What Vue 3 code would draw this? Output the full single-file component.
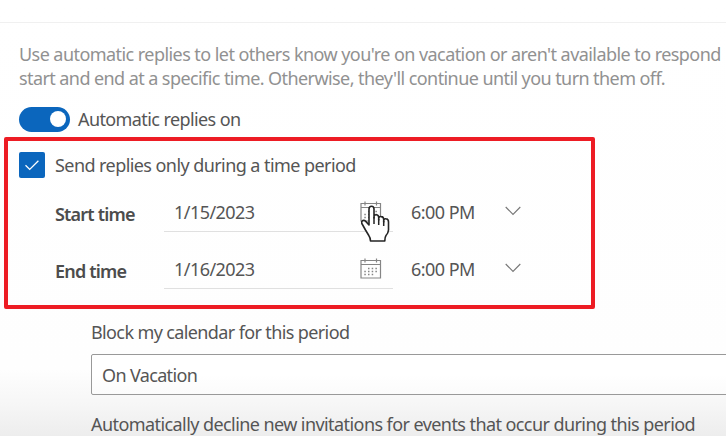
<script setup>
  import { ref } from "vue"

  const repliesOn = ref(true)
  const timePeriod = ref(true)
  const eventTitle = ref("On Vacation")

  const times = [
    { id: "start", label: "Start time", date: "1/15/2023", time: "6:00 PM" },
    { id: "end", label: "End time", date: "1/16/2023", time: "6:00 PM" },
  ]
</script>

<template>
  <main class="settings">
    <header class="top_bar"></header>

    <p class="intro">
      <span class="intro_first">Use automatic replies to let others know you're on vacation or aren't available to respond</span><br />
      <span class="intro_second">start and end at a specific time. Otherwise, they'll continue until you turn them off.</span>
    </p>

    <div class="toggle_row" @click="repliesOn = !repliesOn">
      <span class="toggle" :class="{ on: repliesOn }"><span class="knob"></span></span>
      <span class="toggle_label">Automatic replies on</span>
    </div>

    <section class="period">
      <div class="check_row" @click="timePeriod = !timePeriod">
        <span class="checkbox">
          <svg v-if="timePeriod" width="26" height="26" viewBox="0 0 26 26">
            <path d="M6.5 13.3 L10.7 17.4 L19.4 8.8" fill="none" stroke="#fff" stroke-width="1.3" />
          </svg>
        </span>
        <span class="check_label">Send replies only during a time period</span>
      </div>

      <div v-for="row in times" :key="row.id" class="time_row" :class="row.id">
        <span class="time_label">{{ row.label }}</span>
        <div class="date_field">
          <span class="date">{{ row.date }}</span>
          <svg class="calendar" width="22" height="22" viewBox="0 0 22 22" fill="none" stroke="#858585" stroke-width="1.2">
            <path d="M1 2.5 H20.5 V20 H1 Z M1 6.5 H20.5 M5 0.5 V4.5 M16.5 0.5 V4.5" />
            <path d="M8 10.5 H18 M4.3 13.5 H18 M4.3 16.5 H14.5" stroke-width="1.5" stroke-dasharray="1.5 2.2" />
          </svg>
          <!-- hand pointer over the first date picker -->
          <svg v-if="row.id === 'start'" class="pointer" width="30" height="38" viewBox="0 0 30 38">
            <path
              d="M8 20 V4 Q8 1.3 10.6 1.3 Q13 1.3 13 4 V13 V11.8 Q13 9.8 15.2 9.8 Q17.7 9.8 17.7 12.5 V15 V13.7 Q18 11.3 20.2 11.6 Q22.7 11.8 22.7 14.5 V17 V16 Q22.9 13.5 25 13.8 Q27.5 14 27.5 17 V25 Q27.3 28 25 30.5 Q23.8 32 23.8 36 H9.5 Q9.5 33 7.8 30.5 L4.5 25 L1.7 20 Q0 17.5 1 16.2 Q2.7 14.5 5 16.6 Z"
              fill="#fff"
              stroke="#252525"
              stroke-width="1.6"
              stroke-linejoin="round"
            />
            <path d="M13 12 V19 M17.7 14 V20 M22.7 16 V21" stroke="#252525" stroke-width="1.5" />
          </svg>
        </div>
        <span class="time">{{ row.time }}</span>
        <svg class="chevron" width="16" height="10" viewBox="0 0 16 10">
          <path d="M0.7 1 L8 8.4 L15.3 1" fill="none" stroke="#777" stroke-width="1.1" />
        </svg>
      </div>
    </section>

    <section class="block_calendar">
      <label class="block_label" for="title">Block my calendar for this period</label>
      <input id="title" v-model="eventTitle" class="title_input" type="text" />
      <p class="decline">Automatically decline new invitations for events that occur during this period</p>
    </section>
  </main>
</template>

<style>
  body {
    margin: 0;
    overflow: hidden;
  }
</style>

<style scoped>
  .settings {
    box-sizing: border-box;
    width: 726px;
    height: 436px;
    overflow: hidden;
    background: linear-gradient(#fff 0, #fefefe 370px, #f6f6f6 405px, #ededed 436px);
    color: #555;
    font-family: "Noto Sans", "Open Sans", sans-serif;
    font-size: 18px;
    line-height: 24px;
    white-space: nowrap;
  }

  .top_bar {
    height: 22px;
    border-bottom: 1px solid #f0f0f0;
  }

  .intro {
    margin: 19px 0 0 19px;
    color: #919191;
  }

  .intro_first {
    letter-spacing: -0.56px;
  }

  .intro_second {
    letter-spacing: -0.58px;
  }

  .toggle_row {
    display: flex;
    align-items: center;
    gap: 8px;
    height: 26px;
    margin: 16px 0 0 19px;
  }

  .toggle {
    display: flex;
    align-items: center;
    box-sizing: border-box;
    width: 51px;
    height: 25px;
    padding: 0 4px;
    border-radius: 13px;
    background: #8a8a8a;
  }

  .toggle.on {
    justify-content: flex-end;
    background: #0b66bd;
  }

  .knob {
    width: 16px;
    height: 16px;
    border-radius: 50%;
    background: #fff;
  }

  .toggle_label {
    letter-spacing: -0.6px;
  }

  .period {
    box-sizing: border-box;
    width: 591px;
    height: 172px;
    margin: 5px 0 0 4px;
    padding: 11px 0 0 11px;
    border: 4px solid #ed1c24;
    border-radius: 2px;
  }

  .check_row {
    display: flex;
    align-items: center;
    gap: 10px;
    height: 26px;
  }

  .checkbox {
    width: 26px;
    height: 26px;
    border-radius: 2px;
    background: #0b66bd;
  }

  .checkbox svg {
    display: block;
  }

  .check_label {
    letter-spacing: -0.57px;
  }

  .time_row {
    display: flex;
    align-items: center;
    height: 37px;
    margin-top: 17px;
    padding-left: 36px;
  }

  .time_row.end {
    margin-top: 20px;
  }

  .time_label {
    width: 109px;
    font-weight: 600;
    letter-spacing: -0.8px;
    color: #4c4c4c;
  }

  .date_field {
    position: relative;
    display: flex;
    align-items: center;
    justify-content: space-between;
    box-sizing: border-box;
    width: 229px;
    height: 37px;
    padding: 0 11px 3px 10px;
    border-bottom: 1px solid #e0e0e0;
  }

  .date,
  .time {
    letter-spacing: -0.55px;
  }

  .pointer {
    position: absolute;
    left: 197px;
    top: 10px;
  }

  .time {
    width: 94px;
    margin-left: 18px;
    padding-bottom: 4px;
  }

  .chevron {
    margin-bottom: 5px;
  }

  .block_calendar {
    padding: 11px 0 0 91px;
  }

  .block_label {
    display: block;
    letter-spacing: -0.62px;
  }

  .title_input {
    display: block;
    box-sizing: border-box;
    width: 650px;
    height: 41px;
    margin-top: 10px;
    padding: 0 10px;
    border: 1px solid #999;
    border-radius: 2px;
    outline: none;
    background: linear-gradient(#fff 50%, #fbfbfb);
    color: inherit;
    font: inherit;
    letter-spacing: -0.65px;
  }

  .decline {
    margin: 17px 0 0;
    letter-spacing: -0.575px;
  }
</style>
